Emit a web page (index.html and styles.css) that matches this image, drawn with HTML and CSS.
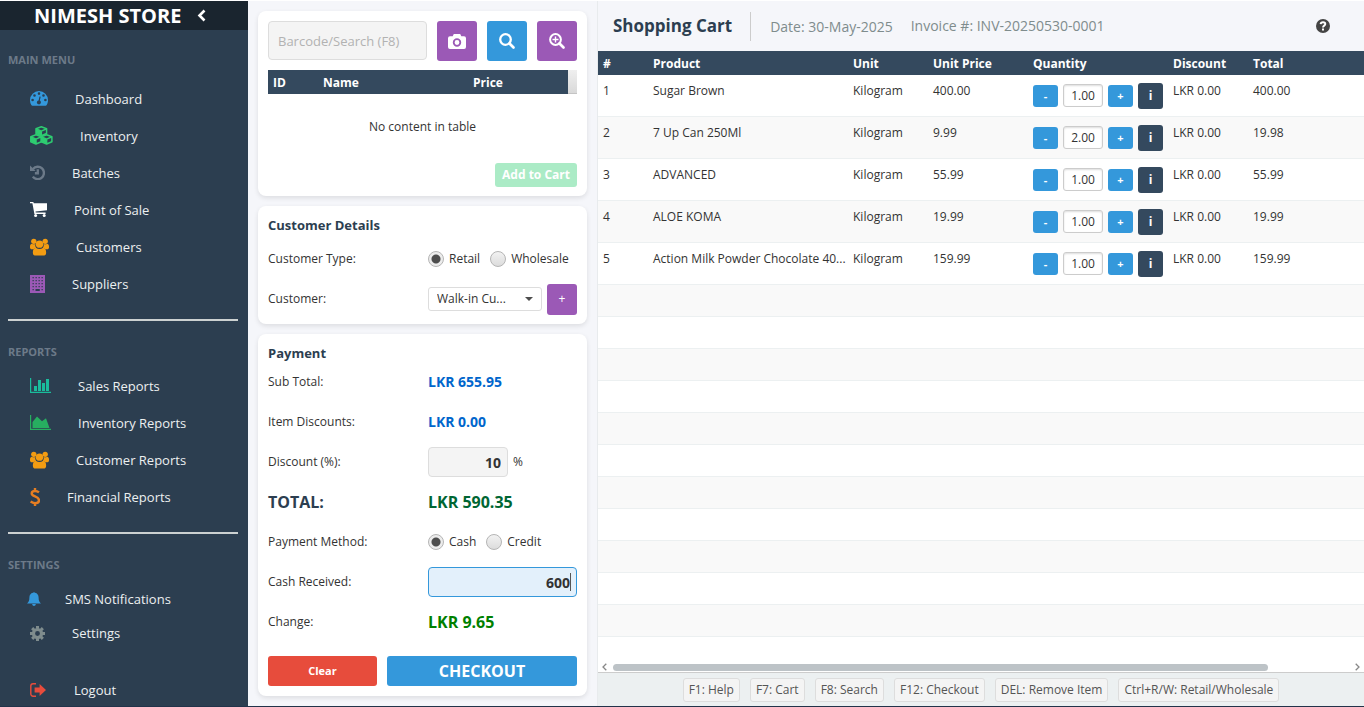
FILE: index.html
```html
<!DOCTYPE html>
<html lang="en">
<head>
<meta charset="utf-8">
<title>Nimesh Store</title>
<link rel="stylesheet" href="styles.css">
</head>
<body>
<svg class="symbols" aria-hidden="true">
  <symbol id="users" viewBox="0 0 20 18">
    <circle cx="4" cy="3" r="2.800"/><circle cx="16" cy="3" r="2.800"/>
    <path d="M0 8.500C0 6.500 1 5.500 2 5.500c1.200.8 2.500.8 3.600.4-.3 1.800.1 3 .9 4.100-1.300.1-2.200.6-2.900 1.400H2.200C.8 11.400 0 10.700 0 9.500zM20 8.500c0-2-1-3-2-3-1.200.8-2.500.8-3.600.4.3 1.800-.1 3-.9 4.100 1.300.1 2.200.6 2.900 1.400h1.400c1.400 0 2.200-.7 2.200-1.900z"/>
    <circle cx="10" cy="6" r="3.900"/>
    <path d="M6.200 9.700c2.300 1.900 5.300 1.900 7.600 0 2.300 0 3.200 2.300 3.200 5.300 0 2-1.200 3-2.800 3H5.800C4.200 18 3 17 3 15c0-3 .9-5.300 3.200-5.300z"/>
  </symbol>
</svg>
<div class="app">
  <nav class="sidebar">
    <div class="brand">
      <span>NIMESH STORE</span>
      <button class="collapse" aria-label="Collapse menu"><svg width="9" height="13" viewBox="0 0 9 13"><path d="M7.500 1.500l-5 5 5 5" fill="none" stroke="#fff" stroke-width="2.600"/></svg></button>
    </div>
    <h2 class="section">MAIN MENU</h2>
    <ul class="menu">
      <li><a href="#"><svg class="c-blue" width="18" height="15" viewBox="0 0 18 15"><path fill-rule="evenodd" d="M9 0a9 9 0 0 1 9 9c0 2-.5 3.600-1.300 5-.3.600-.6.700-1.100.7H2.400c-.5 0-.8-.1-1.100-.7A9.500 9.500 0 0 1 0 9a9 9 0 0 1 9-9zM2.600 7.700a1.300 1.300 0 1 0 0 2.600 1.300 1.300 0 0 0 0-2.600zm1.900-4.500a1.300 1.300 0 1 0 0 2.600 1.300 1.300 0 0 0 0-2.600zM9 1.300a1.300 1.300 0 1 0 0 2.600 1.300 1.300 0 0 0 0-2.600zm4.500 1.900a1.300 1.300 0 1 0 0 2.600 1.300 1.300 0 0 0 0-2.600zm1.900 4.500a1.300 1.300 0 1 0 0 2.600 1.300 1.300 0 0 0 0-2.600zM9.500 5.500l-.9 3.900a2 2 0 1 0 1.200.2l.9-3.800z"/></svg>Dashboard</a></li>
      <li><a href="#"><svg class="c-green" width="23" height="19" viewBox="0 0 23 19"><g fill="none" stroke="currentColor" stroke-width="1.500" stroke-linejoin="round"><path d="M6 2.800L11.300.8l5.300 2v4.700l-5.300 2.300L6 7.500zM6 2.800l5.300 2.300 5.300-2.300M11.300 5.100v4.700"/><path d="M.8 10.800L6 8.800l5.300 2v4.900L6 18 .8 15.700zM.8 10.800L6 13.100l5.300-2.300M6 13.100V18"/><path d="M11.300 10.800l5.300-2 5.300 2v4.900L16.600 18l-5.300-2.300zM11.300 10.800l5.300 2.300 5.300-2.300M16.600 13.100V18"/></g><path d="M6 3l5.300 2.200v4.300L6 7.300zM.8 11L6 13.300v4.400L.8 15.500zM11.300 11l5.300 2.300v4.400l-5.300-2.200z"/></svg>Inventory</a></li>
      <li><a href="#"><svg class="c-slate" width="15" height="15" viewBox="0 0 16 16"><path d="M3.200 4.200A6.600 6.600 0 1 1 3 12.400M8.300 4.600v4.200H5.200" fill="none" stroke="currentColor" stroke-width="2.500"/><path d="M0 .5l6 6H0z"/></svg>Batches</a></li>
      <li><a href="#"><svg class="c-white" width="17" height="15" viewBox="0 0 17 15"><path d="M0 0h3.300l.5 1.200H17v7L5.500 9.500l.2 1.100H15.600v1.300H4.400L2.400 1.300H0z"/><circle cx="5.600" cy="13.400" r="1.500"/><circle cx="14.200" cy="13.400" r="1.500"/></svg>Point of Sale</a></li>
      <li><a href="#"><svg class="c-orange" width="19" height="18"><use href="#users"/></svg>Customers</a></li>
      <li><a href="#"><svg class="c-purple" width="15" height="18" viewBox="0 0 15 18"><path fill-rule="evenodd" d="M0 0h15v18H0zM2.500 2h1.300v1.300H2.500zm3 0h1.300v1.300H5.500zm3 0h1.300v1.300H8.500zm3 0h1.300v1.300h-1.300zm-9 3h1.300v1.300H2.500zm3 0h1.300v1.300H5.500zm3 0h1.300v1.300H8.500zm3 0h1.300v1.300h-1.300zm-9 3h1.300v1.300H2.500zm3 0h1.300v1.300H5.500zm3 0h1.300v1.300H8.500zm3 0h1.300v1.300h-1.300zm-9 3h1.300v1.300H2.500zm3 0h1.300v1.300H5.500zm3 0h1.300v1.300H8.500zm3 0h1.300v1.300h-1.300zm-9 3h1.300v1.300H2.500zm3 0h4.300v2H5.500zm6 0h1.300v1.300h-1.300z"/></svg>Suppliers</a></li>
    </ul>
    <hr class="rule">
    <h2 class="section reports">REPORTS</h2>
    <ul class="menu">
      <li><a href="#"><svg class="c-teal" width="21" height="15" viewBox="0 0 21 15"><path d="M0 0h1.200v13.800H21V15H0zM4 8h3v5H4zM8 2h3v11H8zM12 5h3v8h-3zM16 1h3v12h-3z"/></svg>Sales Reports</a></li>
      <li><a href="#"><svg class="c-leaf" width="21" height="15" viewBox="0 0 21 15"><path d="M0 0h1.200v13.800H21V15H0zM2.500 13V7l4.500-5.500 5 4.700 4-3L19.500 13z"/></svg>Inventory Reports</a></li>
      <li><a href="#"><svg class="c-orange" width="19" height="18"><use href="#users"/></svg>Customer Reports</a></li>
      <li><a href="#"><svg class="c-carrot" width="10" height="18" viewBox="0 0 10 18"><path d="M9 4.400C7.800 3.400 6.500 3 5 3c-2 0-3.300 1-3.300 2.500C1.700 9 9 7.900 9 12.200c0 1.800-1.600 3-4 3-1.700 0-3.200-.6-4.400-1.700M5 0v3M5 15v3" fill="none" stroke="currentColor" stroke-width="2.400"/></svg>Financial Reports</a></li>
    </ul>
    <hr class="rule">
    <h2 class="section settings">SETTINGS</h2>
    <ul class="menu compact">
      <li><a class="notify" href="#"><svg class="c-blue" width="14" height="14" viewBox="0 0 14 14"><path d="M6 .8C6 0 8 0 8 .8c2.400.5 3.600 2.300 3.600 4.700 0 3.500.9 4.800 2.400 6H0c1.500-1.200 2.400-2.500 2.400-6C2.400 3.100 3.600 1.300 6 .8zM5.200 12h3.600c0 2.500-3.600 2.500-3.600 0z"/></svg>SMS Notifications</a></li>
      <li><a href="#"><svg class="c-gray" width="15" height="15" viewBox="0 0 16 16"><circle cx="8" cy="8" r="4.300" fill="none" stroke="currentColor" stroke-width="3.400"/><g stroke="currentColor" stroke-width="3.200"><path d="M8 0v3M8 13v3M0 8h3M13 8h3M2.300 2.300l2.200 2.200M11.500 11.500l2.200 2.200M2.300 13.700l2.200-2.200M11.500 4.500l2.200-2.200"/></g></svg>Settings</a></li>
      <li class="logout"><a href="#"><svg class="c-red" width="17" height="14" viewBox="0 0 17 14"><path d="M6 .8H3A2.200 2.200 0 0 0 .8 3v8A2.200 2.200 0 0 0 3 13.200h3" fill="none" stroke="currentColor" stroke-width="1.400"/><path d="M4.600 4.500h5V1l6.400 6-6.400 6V9.500h-5z"/></svg>Logout</a></li>
    </ul>
  </nav>

  <main class="checkout">
    <section class="card search">
      <div class="search-row">
        <input class="field barcode" type="text" placeholder="Barcode/Search (F8)" aria-label="Barcode or search">
        <button class="tool purple" aria-label="Scan"><svg width="18" height="15" viewBox="0 0 18 15"><path fill="#fff" fill-rule="evenodd" d="M5.800 0h6.400l1.100 2.300H16a2 2 0 0 1 2 2V13a2 2 0 0 1-2 2H2a2 2 0 0 1-2-2V4.300a2 2 0 0 1 2-2h2.700zM9 4.300a4.200 4.200 0 1 0 0 8.400 4.200 4.200 0 0 0 0-8.400zm0 1.800a2.400 2.400 0 1 1 0 4.800 2.400 2.400 0 0 1 0-4.800z"/></svg></button>
        <button class="tool blue" aria-label="Search"><svg class="outline" width="16" height="16" viewBox="0 0 16 16"><circle cx="6.500" cy="6.500" r="5.300" stroke-width="2.300"/><path d="M10.500 10.500l4 4" stroke-width="2.600" stroke-linecap="round"/></svg></button>
        <button class="tool purple" aria-label="Advanced search"><svg class="outline" width="16" height="16" viewBox="0 0 16 16"><circle cx="6.500" cy="6.500" r="5.400" stroke-width="2"/><path d="M10.500 10.500l4 4" stroke-width="2.600" stroke-linecap="round"/><path d="M6.500 3.500v6M3.500 6.500h6" stroke-width="1.400"/></svg></button>
      </div>
      <table class="results">
        <colgroup><col class="r-id"><col class="r-name"><col><col class="r-fill"></colgroup>
        <thead><tr><th>ID</th><th>Name</th><th>Price</th><td class="filler"></td></tr></thead>
        <tbody><tr><td class="empty" colspan="4">No content in table</td></tr></tbody>
      </table>
      <button class="add" disabled>Add to Cart</button>
    </section>

    <section class="card customer">
      <h2>Customer Details</h2>
      <div class="line" role="radiogroup" aria-labelledby="ctype">
        <span id="ctype">Customer Type:</span>
        <div class="value radios">
          <label><input type="radio" name="ctype" checked>Retail</label>
          <label><input type="radio" name="ctype">Wholesale</label>
        </div>
      </div>
      <div class="line">
        <label for="cust">Customer:</label>
        <div class="value">
          <span class="picker"><select id="cust"><option>Walk-in Cu...</option></select></span>
          <button class="new-customer" aria-label="Add customer">+</button>
        </div>
      </div>
    </section>

    <section class="card payment">
      <h2>Payment</h2>
      <div class="line"><span>Sub Total:</span><strong class="money">LKR 655.95</strong></div>
      <div class="line"><span>Item Discounts:</span><strong class="money">LKR 0.00</strong></div>
      <div class="line"><label for="disc">Discount (%):</label><div class="value"><input id="disc" class="field amount" type="text" value="10">%</div></div>
      <div class="line"><span class="total-label">TOTAL:</span><strong class="total">LKR 590.35</strong></div>
      <div class="line" role="radiogroup" aria-labelledby="pmethod">
        <span id="pmethod">Payment Method:</span>
        <div class="value radios">
          <label><input type="radio" name="pmethod" checked>Cash</label>
          <label><input type="radio" name="pmethod">Credit</label>
        </div>
      </div>
      <div class="line"><label for="cash">Cash Received:</label><div class="value cash-box"><input id="cash" class="field amount cash" type="text" value="600"></div></div>
      <div class="line"><span>Change:</span><strong class="change">LKR 9.65</strong></div>
      <div class="actions">
        <button class="clear">Clear</button>
        <button class="pay">CHECKOUT</button>
      </div>
    </section>
  </main>

  <section class="cart">
    <header class="cart-head">
      <h1>Shopping Cart</h1>
      <p class="date">Date: 30-May-2025</p>
      <p>Invoice #: INV-20250530-0001</p>
      <button class="help" aria-label="Help"><svg width="14" height="14" viewBox="0 0 14 14"><circle cx="7" cy="7" r="7" fill="#444"/><path d="M4.600 5.200c.2-1.500 1.200-2 2.400-2s2.300.7 2.300 1.900c0 1.600-2.300 1.500-2.300 3.300" fill="none" stroke="#fff" stroke-width="1.900"/><path d="M6 9.600h2v1.900H6z" fill="#fff"/></svg></button>
    </header>
    <div class="grid-wrap">
      <table class="items">
        <colgroup><col class="w-num"><col class="w-product"><col class="w-small"><col class="w-price"><col class="w-qty"><col class="w-small"><col></colgroup>
        <thead><tr><th>#</th><th>Product</th><th>Unit</th><th>Unit Price</th><th>Quantity</th><th>Discount</th><th>Total</th></tr></thead>
        <tbody>
          <tr><td>1</td><td>Sugar Brown</td><td>Kilogram</td><td>400.00</td><td><div class="qty"><button aria-label="Less">-</button><input type="text" value="1.00" aria-label="Quantity"><button aria-label="More">+</button><button class="info" aria-label="Info">i</button></div></td><td>LKR 0.00</td><td>400.00</td></tr>
          <tr><td>2</td><td>7 Up Can 250Ml</td><td>Kilogram</td><td>9.99</td><td><div class="qty"><button aria-label="Less">-</button><input type="text" value="2.00" aria-label="Quantity"><button aria-label="More">+</button><button class="info" aria-label="Info">i</button></div></td><td>LKR 0.00</td><td>19.98</td></tr>
          <tr><td>3</td><td>ADVANCED</td><td>Kilogram</td><td>55.99</td><td><div class="qty"><button aria-label="Less">-</button><input type="text" value="1.00" aria-label="Quantity"><button aria-label="More">+</button><button class="info" aria-label="Info">i</button></div></td><td>LKR 0.00</td><td>55.99</td></tr>
          <tr><td>4</td><td>ALOE KOMA</td><td>Kilogram</td><td>19.99</td><td><div class="qty"><button aria-label="Less">-</button><input type="text" value="1.00" aria-label="Quantity"><button aria-label="More">+</button><button class="info" aria-label="Info">i</button></div></td><td>LKR 0.00</td><td>19.99</td></tr>
          <tr><td>5</td><td>Action Milk Powder Chocolate 40...</td><td>Kilogram</td><td>159.99</td><td><div class="qty"><button aria-label="Less">-</button><input type="text" value="1.00" aria-label="Quantity"><button aria-label="More">+</button><button class="info" aria-label="Info">i</button></div></td><td>LKR 0.00</td><td>159.99</td></tr>
          <tr class="blank"><td colspan="7"></td></tr>
          <tr class="blank"><td colspan="7"></td></tr>
          <tr class="blank"><td colspan="7"></td></tr>
          <tr class="blank"><td colspan="7"></td></tr>
          <tr class="blank"><td colspan="7"></td></tr>
          <tr class="blank"><td colspan="7"></td></tr>
          <tr class="blank"><td colspan="7"></td></tr>
          <tr class="blank"><td colspan="7"></td></tr>
          <tr class="blank"><td colspan="7"></td></tr>
          <tr class="blank"><td colspan="7"></td></tr>
          <tr class="blank"><td colspan="7"></td></tr>
        </tbody>
      </table>
    </div>
    <div class="scroller">
      <svg width="5" height="8" viewBox="0 0 5 8"><path d="M4.300.7L1 4l3.300 3.300" fill="none" stroke="#888" stroke-width="1.300"/></svg>
      <div class="track"><div class="thumb"></div></div>
      <svg width="5" height="8" viewBox="0 0 5 8"><path d="M.7.7L4 4 .7 7.300" fill="none" stroke="#888" stroke-width="1.300"/></svg>
    </div>
    <footer class="keys">
      <span>F1: Help</span><span>F7: Cart</span><span>F8: Search</span><span>F12: Checkout</span><span>DEL: Remove Item</span><span>Ctrl+R/W: Retail/Wholesale</span>
    </footer>
  </section>
</div>
</body>
</html>
```

FILE: styles.css
```css
* { box-sizing: border-box; }
body {
  margin: 0;
  background: #f5f6fa;
  color: #333;
  font: 12px/18px "Open Sans", "Noto Sans", sans-serif;
}
h1, h2, p, ul { margin: 0; padding: 0; }
ul { list-style: none; }
button, input, select { font: inherit; color: inherit; margin: 0; }
button {
  display: flex;
  align-items: center;
  justify-content: center;
  border: 0;
  border-radius: 3px;
  padding: 0;
  color: #fff;
}
svg { fill: currentColor; flex: none; }
.outline { fill: none; stroke: currentColor; }
.symbols { position: absolute; width: 0; height: 0; }

.app {
  display: grid;
  grid-template-columns: 248px 349px minmax(0, 1fr);
  min-height: 100vh;
  border-top: 1px solid #fff;
  border-bottom: 1px solid #22334a;
}

/* Sidebar */
.sidebar { background: #2c3e50; color: #ecf0f1; }
.brand {
  display: flex;
  align-items: center;
  gap: 16px;
  height: 29px;
  padding-left: 34px;
  background: #1a252f;
  color: #fff;
  font-size: 20px;
  font-weight: 700;
}
.collapse { background: none; }
.section {
  margin: 21px 8px 11px;
  color: #6c7a89;
  font-size: 11px;
  line-height: 18px;
  font-weight: 700;
}
.menu a {
  display: flex;
  align-items: center;
  gap: 27px;
  height: 37px;
  padding-left: 30px;
  color: #ecf0f1;
  font-size: 13px;
  text-decoration: none;
}
.menu .notify { padding-left: 27px; gap: 24px; }
.compact a { height: 34px; }
.compact .logout a { height: 30px; }
.logout { margin-top: 25px; }
.rule { height: 2px; margin: 17px 10px 0 8px; border: 0; background: #ccd1d1; }
.section.reports { margin: 22px 8px 6px; }
.section.settings { margin: 22px 8px 8px; }
.c-blue { color: #3498db; }
.c-green { color: #2ecc71; }
.c-slate { color: #6c7a89; }
.c-white { color: #fff; }
.c-orange { color: #f39c12; }
.c-purple { color: #9b59b6; }
.c-teal { color: #1abc9c; }
.c-leaf { color: #27ae60; }
.c-carrot { color: #e67e22; }
.c-gray { color: #7f8c8d; }
.c-red { color: #e74c3c; }

/* Checkout column */
.checkout { display: flex; flex-direction: column; gap: 10px; padding: 10px; }
.card {
  padding: 10px;
  border-radius: 8px;
  background: #fff;
  box-shadow: 0 2px 5px rgba(0, 0, 0, 0.1);
}
.card h2 { color: #2c3e50; font-size: 13px; line-height: 18px; }
.field {
  min-width: 0;
  border: 1px solid #ddd;
  border-radius: 4px;
  background: #f4f4f4;
  outline: 0;
}
.search-row { display: flex; gap: 10px; }
.barcode { flex: 1; height: 39px; padding: 0 9px; font-size: 13px; }
.barcode::placeholder { color: #b2b2b2; }
.tool { width: 40px; height: 40px; }
.purple, .new-customer { background: #9b59b6; }
.blue { background: #3498db; }
table { width: 100%; border-collapse: separate; border-spacing: 0; table-layout: fixed; }
th {
  height: 24px;
  padding: 2px 5px 0;
  background: #34495e;
  color: #fff;
  text-align: left;
  white-space: nowrap;
  font-size: 12px;
}
.results { margin-top: 9px; }
.r-id { width: 50px; }
.r-name { width: 150px; }
.r-fill { width: 9px; }
.filler { padding: 0; border-bottom: 1px solid #c4c4c4; background: linear-gradient(#efefef, #d9d9d9); }
.empty { height: 66px; padding: 0; text-align: center; }
.add {
  width: 82px;
  height: 24px;
  margin: 3px 0 0 auto;
  background: #abebc6;
  font-weight: 700;
}
.card.search { padding-bottom: 9px; }
.card.customer { padding-bottom: 5px; }
.customer h2 { margin-bottom: 5px; }
.line { display: grid; grid-template-columns: 160px minmax(0, 1fr); align-items: center; height: 40px; }
.value { display: flex; align-items: center; gap: 5px; }
.radios { gap: 10px; }
.radios label { display: flex; align-items: center; gap: 5px; }
input[type="radio"] {
  appearance: none;
  width: 16px;
  height: 16px;
  border: 1px solid #b5b5b5;
  border-radius: 50%;
  background: linear-gradient(#f2f2f2, #dcdcdc);
}
input[type="radio"]:checked { background: radial-gradient(circle, #4d4d4d 4px, #ececec 5px); }
.picker { position: relative; flex: 1; }
.picker select {
  display: block;
  width: 100%;
  height: 24px;
  padding: 0 8px;
  appearance: none;
  border: 1px solid #ddd;
  border-radius: 3px;
  background: #fff;
}
.picker::after {
  content: "";
  position: absolute;
  top: 10px;
  right: 9px;
  border: 4px solid transparent;
  border-top-color: #4d4d4d;
  border-bottom: 0;
}
.new-customer { width: 30px; height: 31px; }
.payment { flex: 1; display: flex; flex-direction: column; }
.money { color: #0066cc; font-size: 14px; }
.total-label { color: #2c3e50; font-size: 16px; font-weight: 700; }
.total { color: #006633; font-size: 16px; }
.change { color: #008000; font-size: 16px; }
.amount { width: 80px; height: 30px; padding: 0 6px; text-align: right; font-size: 14px; font-weight: 700; }
.cash-box { position: relative; }
.cash { flex: 1; border-color: #3498db; background: #e3f0fb; }
.cash-box::after {
  content: "";
  position: absolute;
  top: 6px;
  right: 6px;
  width: 1px;
  height: 18px;
  background: #555;
}
.actions { display: grid; grid-template-columns: 109fr 190fr; gap: 10px; margin-top: auto; }
.actions button { height: 30px; font-weight: 700; }
.actions .clear { background: #e74c3c; font-size: 11px; }
.actions .pay { background: #3498db; font-size: 16px; }

/* Cart */
.cart { display: flex; flex-direction: column; border-left: 1px solid #e8ebed; background: #fff; }
.cart-head {
  display: flex;
  align-items: center;
  gap: 18px;
  height: 50px;
  padding: 0 34px 0 15px;
  background: #f5f6fa;
  color: #7f8c8d;
  font-size: 14px;
}
.cart-head h1 { color: #2c3e50; font-size: 17px; }
.date { line-height: 29px; padding-left: 19px; border-left: 1px solid #ccc; }
.help { margin-left: auto; background: none; }
.grid-wrap { flex: 1; }
.w-num { width: 50px; }
.w-product { width: 200px; }
.w-small { width: 80px; }
.w-price { width: 100px; }
.w-qty { width: 140px; }
.items td {
  height: 42px;
  padding: 7px 5px;
  border-bottom: 1px solid #ecf0f1;
  vertical-align: top;
  white-space: nowrap;
}
.items .blank td { height: 32px; padding: 0; }
.items tbody tr:nth-child(even) { background: #f9f9f9; }
.qty { display: flex; align-items: center; gap: 5px; height: 27px; }
.qty button { width: 25px; height: 22px; background: #3498db; font-size: 11px; font-weight: 700; }
.qty .info { height: 26px; background: #34495e; font-size: 12px; }
.qty input {
  width: 40px;
  height: 23px;
  padding: 0;
  border: 1px solid #ccc;
  border-radius: 3px;
  text-align: center;
  box-shadow: inset 0 1px 2px #ddd;
}
.scroller { display: flex; align-items: center; gap: 6px; height: 10px; padding: 0 4px; }
.track { flex: 1; }
.thumb { width: 89%; height: 7px; border-radius: 4px; background: #bdc3c7; }
.keys {
  display: flex;
  align-items: center;
  justify-content: center;
  gap: 10px;
  height: 34px;
  border-top: 1px solid #ccc;
  background: #ecf0f1;
  color: #555;
}
.keys span {
  padding: 1px 5px;
  border: 1px solid #ddd;
  border-radius: 3px;
  background: #f4f4f4;
  line-height: 20px;
}
```
